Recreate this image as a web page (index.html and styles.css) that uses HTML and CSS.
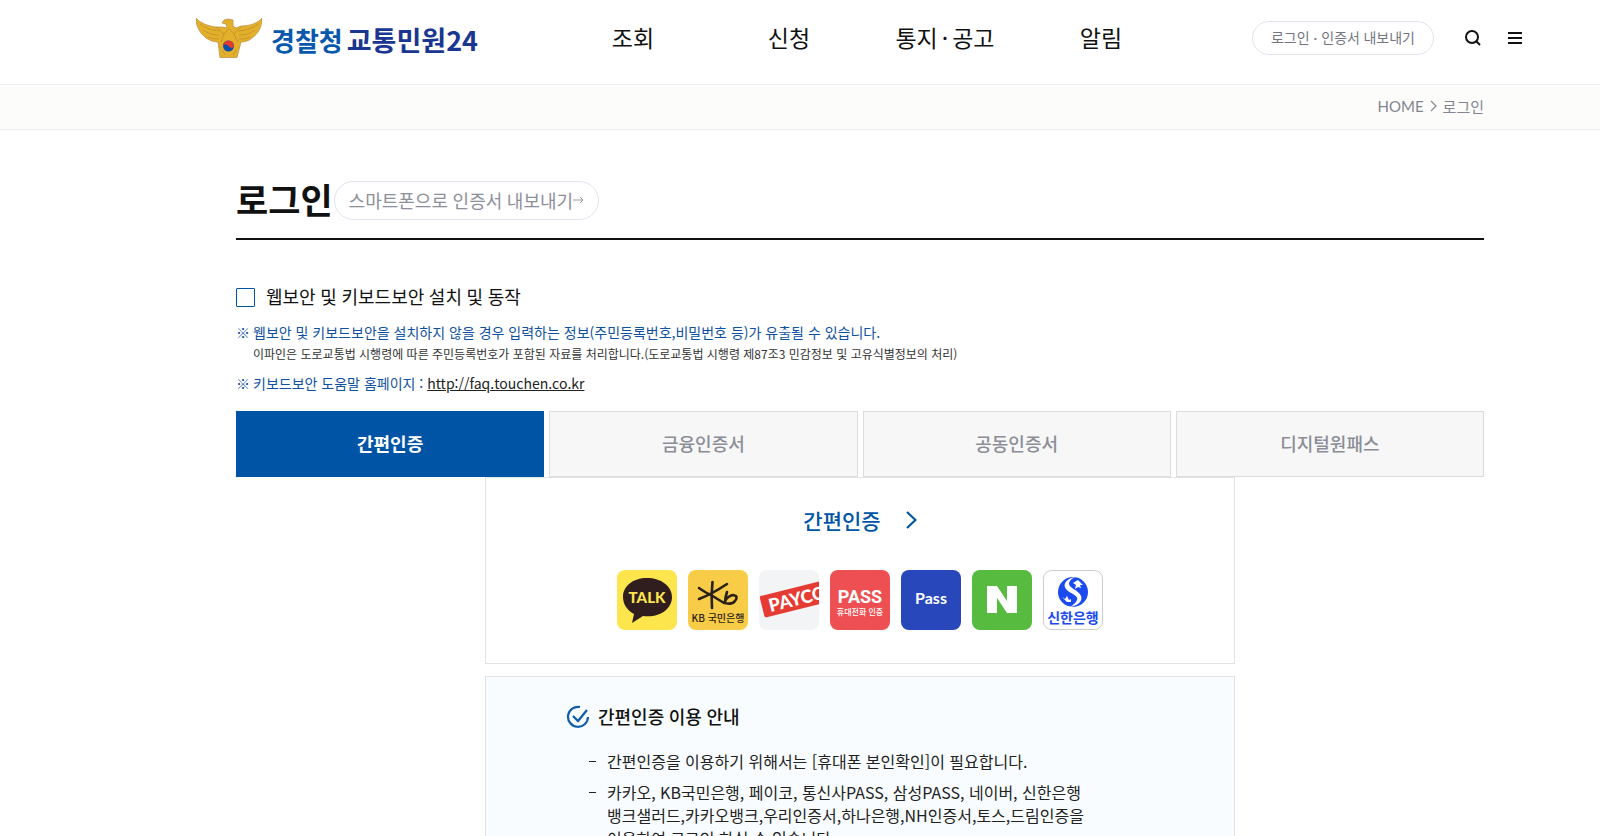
FILE: index.html
```html
<!DOCTYPE html>
<html lang="ko">
<head>
<meta charset="utf-8">
<meta name="viewport" content="width=device-width, initial-scale=1">
<title>로그인 | 경찰청 교통민원24</title>
<link rel="stylesheet" href="styles.css">
</head>
<body>
<header class="header">
  <a class="logo" href="#">
    <svg class="logo-emblem" viewBox="0 0 66 40" aria-hidden="true">
      <path d="M0 0C4 5 12 8 20 9L26 9 31 10 30 6 26 5 28 2 32 1 37 2 37 8 40 10 45 8C54 8 62 5 66 0C66 9 62 16 56 20C53 23 48 24 45 24L41 39.500H24L22 24C17 24 13 22 10 20C4 15 0 9 0 0Z" fill="#e3b02c" stroke="#b98a3c" stroke-width=".7"/>
      <path d="M4 6C10 11 16 12 23 13M7 12C13 16 17 17 23 17M12 19C16 21 19 21 23 21M62 6C56 11 50 12 43 13M59 12C53 16 49 17 43 17M54 19C50 21 47 21 43 21M20 9L28 16 33 11 38 16 45 9M28 16L25 24M38 16L42 24M26 32L29 37M40 32L37 37" fill="none" stroke="#b5832c" stroke-width=".6"/>
      <circle cx="32.500" cy="28" r="5.500" fill="#0b50a8"/>
      <path d="M27 28A5.500 5.500 0 0 1 38 28C37 31 34 30 32.500 28S28 26 27 28Z" fill="#e23a2e"/>
    </svg>
    <span class="logo-name"><span class="logo-agency">경찰청</span><span class="logo-service">교통민원24</span></span>
  </a>
  <nav class="nav" aria-label="주 메뉴">
    <a href="#">조회</a>
    <a href="#">신청</a>
    <a href="#">통지<span class="nav-dot">·</span>공고</a>
    <a href="#">알림</a>
  </nav>
  <div class="tools">
    <div class="tools-pill"><a href="#">로그인</a><span class="dot">·</span><a href="#">인증서 내보내기</a></div>
    <button class="icon-button search" type="button" aria-label="검색">
      <svg width="16" height="16" viewBox="0 0 16 16" aria-hidden="true"><circle cx="7" cy="7" r="6" fill="none" stroke="#111" stroke-width="2"/><path d="M11 11L15 15" stroke="#111" stroke-width="2"/></svg>
    </button>
    <button class="icon-button" type="button" aria-label="전체메뉴">
      <svg width="14" height="14" viewBox="0 0 14 14" aria-hidden="true"><path d="M0 2H14M0 7H14M0 12H14" stroke="#111" stroke-width="2"/></svg>
    </button>
  </div>
</header>
<nav class="breadcrumb" aria-label="현재 위치">
  <a href="#">HOME</a>
  <svg width="7" height="12" viewBox="0 0 7 12" aria-hidden="true"><path d="M1 1L6 6 1 11" fill="none" stroke="#8a8c96" stroke-width="1.300"/></svg>
  <span>로그인</span>
</nav>
<main class="content">
  <div class="title-row">
    <h1 class="title">로그인</h1>
    <a class="export-link" href="#">스마트폰으로 인증서 내보내기<svg width="11" height="8" viewBox="0 0 11 8" aria-hidden="true"><path d="M0 4H10M7 1L10 4 7 7" fill="none" stroke="#9496a2"/></svg></a>
  </div>
  <label class="security"><input class="security-box" type="checkbox"><span>웹보안 및 키보드보안 설치 및 동작</span></label>
  <div class="notes">
    <p class="note"><span class="mark">※</span><span>웹보안 및 키보드보안을 설치하지 않을 경우 입력하는 정보(주민등록번호,비밀번호 등)가 유출될 수 있습니다.</span></p>
    <p class="note-detail">이파인은 도로교통법 시행령에 따른 주민등록번호가 포함된 자료를 처리합니다.(도로교통법 시행령 제87조3 민감정보 및 고유식별정보의 처리)</p>
    <p class="note"><span class="mark">※</span><span>키보드보안 도움말 홈페이지 : <a class="help-link" href="#">http://faq.touchen.co.kr</a></span></p>
  </div>
  <div class="tabs" role="tablist">
    <button class="tab tab-active" type="button" role="tab" aria-selected="true">간편인증</button>
    <button class="tab" type="button" role="tab" aria-selected="false">금융인증서</button>
    <button class="tab" type="button" role="tab" aria-selected="false">공동인증서</button>
    <button class="tab" type="button" role="tab" aria-selected="false">디지털원패스</button>
  </div>
  <section class="panel providers-panel">
    <a class="simple-auth" href="#">간편인증<svg width="11" height="18" viewBox="0 0 11 18" aria-hidden="true"><path d="M1 1L9.500 9 1 17" fill="none" stroke="#0054a6" stroke-width="2.200"/></svg></a>
    <div class="providers">
      <button class="provider" type="button" aria-label="카카오톡">
        <svg viewBox="0 0 60 60"><rect width="60" height="60" rx="8" fill="#fde54d"/><path d="M30 8C16 8 6 16 6 27C6 34 10 40 17 44L15 53 26 46C43 48 55 39 55 27C55 16 44 8 30 8Z" fill="#2f1e1d"/><text class="talk" x="30" y="33" text-anchor="middle" fill="#fde54d">TALK</text></svg>
      </button>
      <button class="provider" type="button" aria-label="KB국민은행">
        <svg viewBox="0 0 60 60"><rect width="60" height="60" rx="8" fill="#f8cc46"/><path d="M24.500 12Q23 25 24 38M11 18Q18 23 23 25L36 33M11 29Q24 24 39 14M39 22Q37 28 37 33Q44 35 47 31Q51 26 45 25Q40 26 37 31" fill="none" stroke="#2a211b" stroke-width="2.600" stroke-linecap="round" stroke-linejoin="round"/><text class="bank" x="30" y="51.500" text-anchor="middle" fill="#2a211b">KB 국민은행</text></svg>
      </button>
      <button class="provider" type="button" aria-label="페이코">
        <svg viewBox="0 0 60 60"><defs><clipPath id="payco-tile"><rect width="60" height="60" rx="8"/></clipPath></defs><g clip-path="url(#payco-tile)"><rect width="60" height="60" fill="#f3f4f6"/><g transform="rotate(-14 31 29)"><rect x="2" y="19" width="70" height="22" rx="2" fill="#e63b33"/><text class="payco" x="9" y="37" fill="#fff">PAYCO</text></g></g></svg>
      </button>
      <button class="provider" type="button" aria-label="PASS 휴대전화 인증">
        <svg viewBox="0 0 60 60"><rect width="60" height="60" rx="8" fill="#ee4f52"/><text class="pass" x="30" y="33" text-anchor="middle" fill="#fff">PASS</text><text class="pass-sub" x="30" y="45" text-anchor="middle" fill="#fff">휴대전화 인증</text></svg>
      </button>
      <button class="provider" type="button" aria-label="삼성패스">
        <svg viewBox="0 0 60 60"><rect width="60" height="60" rx="8" fill="#2847bb"/><text class="samsung" x="30" y="34" text-anchor="middle" fill="#fff">Pass</text></svg>
      </button>
      <button class="provider" type="button" aria-label="네이버">
        <svg viewBox="0 0 60 60"><rect width="60" height="60" rx="8" fill="#56bb3e"/><path d="M15 16H25L35 31V16H45V43H35L25 28V43H15Z" fill="#fff"/></svg>
      </button>
      <button class="provider" type="button" aria-label="신한은행">
        <svg viewBox="0 0 60 60"><rect x=".5" y=".5" width="59" height="59" rx="8" fill="#fff" stroke="#ccc"/><circle cx="30" cy="22" r="15" fill="#1b4bf0"/><path d="M33 7C24 8 19 14 23 19C27 24 36 25 34 30C33 33 29 36 26 37C35 36 40 31 38 26C36 20 25 18 26 13C27 10 29 8 33 7Z" fill="#fff"/><path d="M30 13L35 10 40 15 37 15 38 18 35 17 32 19 33 15ZM19 27L22 29 24 26 26 30 28 29 28 32 24 32Z" fill="#fff"/><text class="shinhan" x="30" y="53" text-anchor="middle" fill="#1b4bf0">신한은행</text></svg>
      </button>
    </div>
  </section>
  <section class="panel guide">
    <h2 class="guide-title"><svg width="24" height="24" viewBox="0 0 24 24" aria-hidden="true"><path d="M14 2A10 10 0 1 0 22 12M7 11L12 16 21 5" fill="none" stroke="#0f5cab" stroke-width="2.200"/></svg>간편인증 이용 안내</h2>
    <ul class="guide-list">
      <li>간편인증을 이용하기 위해서는 [휴대폰 본인확인]이 필요합니다.</li>
      <li>카카오, KB국민은행, 페이코, 통신사PASS, 삼성PASS, 네이버, 신한은행<br>뱅크샐러드,카카오뱅크,우리인증서,하나은행,NH인증서,토스,드림인증을<br>이용하여 로그인 하실 수 있습니다.</li>
    </ul>
  </section>
</main>
</body>
</html>
```
FILE: styles.css
```css
* { box-sizing: border-box; }
body {
  margin: 0;
  height: 100vh;
  overflow: hidden;
  background: #fff;
  color: #111;
  font-family: "Noto Sans CJK KR", "Noto Sans", sans-serif;
  font-size: 16px;
}
h1, h2, p, ul { margin: 0; padding: 0; }
a { color: inherit; text-decoration: none; }
button { border: 0; padding: 0; background: none; font-family: inherit; color: inherit; cursor: pointer; }
svg { display: block; }

.header {
  display: flex;
  align-items: center;
  height: 85px;
  padding: 0 78px 8px 196px;
  border-bottom: 1px solid #eeeff4;
}
.logo { display: flex; align-items: center; gap: 9px; width: 284px; }
.logo-emblem { width: 66px; height: 40px; }
.logo-name { display: flex; align-items: baseline; gap: 4px; padding-top: 4px; font-size: 26px; line-height: 32px; font-weight: 700; white-space: nowrap; }
.logo-agency { color: #0858ae; }
.logo-service { color: #1a3690; font-size: 27px; }
.nav { display: grid; grid-template-columns: repeat(4, 156px); margin-left: 75px; padding-bottom: 2px; text-align: center; font-size: 23px; line-height: 32px; }
.nav-dot { margin: 0 4px; }
.tools { display: flex; align-items: center; margin-left: auto; }
.tools-pill {
  display: flex;
  align-items: center;
  gap: 4px;
  height: 34px;
  padding: 0 18px 2px;
  border: 1px solid #dfe4ef;
  border-radius: 17px;
  color: #74767f;
  font-family: Lato, "Noto Sans CJK KR", sans-serif;
  font-size: 14px;
  white-space: nowrap;
}
.icon-button.search { margin: 0 27px 0 31px; }

.breadcrumb {
  display: flex;
  align-items: center;
  justify-content: flex-end;
  gap: 6px;
  height: 45px;
  padding: 0 116px 2px 0;
  background: #fcfcfb;
  border-bottom: 1px solid #eeeff2;
  color: #83858e;
  font-family: Lato, "Noto Sans CJK KR", sans-serif;
  font-size: 15px;
}

.content { margin: 0 116px 0 236px; }
.title-row {
  display: flex;
  align-items: center;
  height: 110px;
  padding-top: 32px;
  border-bottom: 2px solid #111;
}
.title { padding-bottom: 2px; font-size: 35px; line-height: 48px; font-weight: 700; }
.export-link {
  display: flex;
  align-items: center;
  height: 39px;
  padding: 0 14px;
  margin-left: 1px;
  border: 1px solid #dfe4ef;
  border-radius: 20px;
  color: #8d8f9b;
  font-family: Lato, "Noto Sans CJK KR", sans-serif;
  font-size: 18px;
  white-space: nowrap;
}
.security { display: flex; align-items: center; gap: 11px; width: fit-content; margin-top: 43px; font-family: Lato, "Noto Sans CJK KR", sans-serif; font-size: 18px; line-height: 28px; }
.security-box { appearance: none; width: 19px; height: 19px; margin: 0; border: 1px solid #0054a6; border-radius: 1px; background: #fff; }
.security-box:checked { background: #0054a6; }
.notes { margin-top: 10px; }
.note { display: flex; color: #0f509f; font-size: 14px; line-height: 22px; }
.mark { width: 17px; }
.note-detail { padding: 1px 0 8px 17px; color: #333; font-size: 12px; line-height: 20px; }
.help-link { color: #222; text-decoration: underline; }

.tabs { display: grid; grid-template-columns: repeat(4, 1fr); gap: 5px; margin-top: 17px; }
.tab { height: 66px; padding-bottom: 2px; border: 1px solid #dcdcde; background: #f7f7f7; color: #8b8d97; font-size: 18px; font-weight: 500; }
.tab-active { border-color: #0054a6; background: #0054a6; color: #fff; font-weight: 700; }

.panel { max-width: 750px; margin: 0 auto; border: 1px solid #e2e3e4; }
.providers-panel { padding: 26px 0 33px; }
.simple-auth { display: flex; align-items: center; justify-content: center; gap: 25px; color: #0054a6; font-size: 21px; line-height: 32px; font-weight: 500; }
.providers { display: flex; justify-content: center; gap: 11px; margin-top: 34px; }
.provider { width: 60px; height: 60px; }
.provider svg { width: 60px; height: 60px; }
.talk { font: 900 15px Lato, sans-serif; }
.bank { font: 500 10px "Noto Sans CJK KR", sans-serif; }
.payco { font: 900 18px Lato, sans-serif; }
.pass { font: 700 18px "Roboto", sans-serif; }
.pass-sub { font: 500 8px "Noto Sans CJK KR", sans-serif; }
.samsung { font: 700 16px Lato, sans-serif; }
.shinhan { font: 700 14px "Noto Sans CJK KR", sans-serif; }

.guide { margin-top: 12px; padding: 26px 80px 40px; background: #f8fcff; }
.guide-title { display: flex; align-items: center; gap: 8px; font-family: Lato, "Noto Sans CJK KR", sans-serif; font-size: 18px; line-height: 28px; font-weight: 500; }
.guide-list { margin-top: 19px; padding-left: 41px; list-style: none; font-size: 16px; line-height: 23px; color: #222; }
.guide-list li { position: relative; margin-bottom: 8px; white-space: nowrap; }
.guide-list li::before { content: ""; position: absolute; left: -18px; top: 11px; width: 7px; height: 1px; background: #222; }
```
